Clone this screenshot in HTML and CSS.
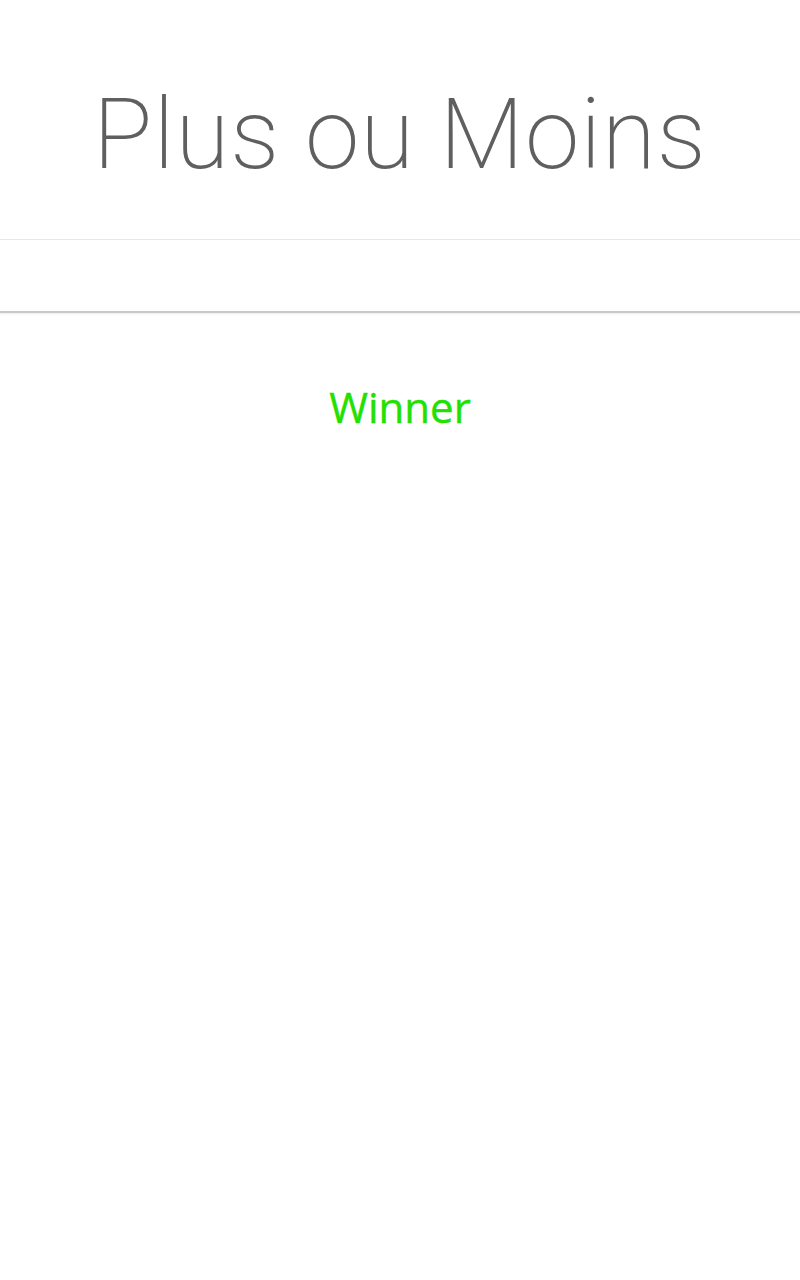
FILE: index.html
```html
<!DOCTYPE html>
<html>
<head>
<meta charset="utf-8">
<link rel="stylesheet" href="styles.css">
</head>
<body>
<header class="header">
  <h1 class="title">Plus ou Moins</h1>
</header>
<div class="bar"></div>
<main class="content">
  <p class="result">Winner</p>
</main>
</body>
</html>
```
FILE: styles.css
```css
html, body {
  margin: 0;
  padding: 0;
  background: #ffffff;
}
.header {
  height: 239px;
  border-bottom: 1px solid #e8e8e8;
  display: flex;
  align-items: center;
  justify-content: center;
}
.title {
  margin: 0;
  margin-top: 30px;
  font-family: Roboto, "DejaVu Sans", sans-serif;
  font-weight: 200;
  font-size: 98px;
  letter-spacing: 1px;
  color: #5f5f5f;
}
.bar {
  height: 71px;
  background: #ffffff;
  border-bottom: 2px solid #c9c9c9;
  box-shadow: 0 1px 2px rgba(0,0,0,0.08);
}
.content {
  display: flex;
  justify-content: center;
  padding-top: 64px;
}
.result {
  margin: 0;
  font-family: "Open Sans", sans-serif;
  font-weight: 400;
  font-size: 42px;
  line-height: 60px;
  color: #22e000;
  -webkit-text-stroke: 0.4px #22e000;
}
```
